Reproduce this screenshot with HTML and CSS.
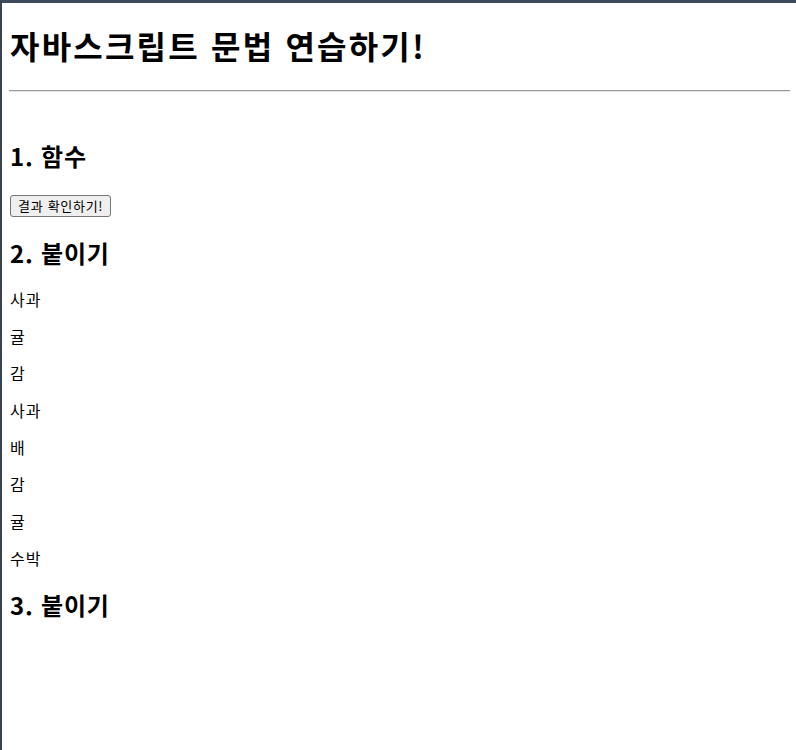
FILE: index.html
```html
<!DOCTYPE html>
<html lang="ko">
<head>
<meta charset="utf-8">
<title>자바스크립트 문법 연습하기!</title>
<link rel="stylesheet" href="styles.css">
</head>
<body>
<div class="frame">
  <h1 class="title">자바스크립트 문법 연습하기!</h1>
  <hr class="divider">
  <h2 class="section">1. 함수</h2>
  <button class="btn" type="button">결과 확인하기!</button>
  <h2 class="section">2. 붙이기</h2>
  <p class="item">사과</p>
  <p class="item">귤</p>
  <p class="item">감</p>
  <p class="item">사과</p>
  <p class="item">배</p>
  <p class="item">감</p>
  <p class="item">귤</p>
  <p class="item">수박</p>
  <h2 class="section">3. 붙이기</h2>
</div>
</body>
</html>
```
FILE: styles.css
```css
html, body {
  margin: 0;
  padding: 0;
  background: #ffffff;
}
body {
  font-family: "Noto Sans CJK KR", "Noto Sans", sans-serif;
  color: #000;
}
.frame {
  min-height: 747px;
  border-top: 3px solid #3e4a5b;
  border-left: 2px solid #3a4350;
  padding: 0 6px 0 7px;
  overflow: hidden;
}
.title {
  font-size: 32px;
  font-weight: 700;
  line-height: 43px;
  letter-spacing: 2.2px;
  margin: 21px 0 23px 1px;
}
.divider {
  margin: 0 0 48px;
  border: none;
  border-top: 1px solid #9a9a9a;
  border-bottom: 1px solid #e4e4e4;
  height: 0;
}
.section {
  font-size: 24px;
  font-weight: 700;
  line-height: 32px;
  letter-spacing: 0.8px;
  margin: 20px 0 20px 1px;
}
.btn {
  font-family: "Noto Sans CJK KR", sans-serif;
  font-size: 13px;
  line-height: 16px;
  letter-spacing: 0.7px;
  padding: 2px 7px;
  margin-left: 1px;
  background: #efefef;
  border: 1px solid #767676;
  border-radius: 3px;
  color: #000;
}
.item {
  font-size: 16px;
  line-height: 21px;
  letter-spacing: 1px;
  margin: 16px 0 16px 1px;
}
```
